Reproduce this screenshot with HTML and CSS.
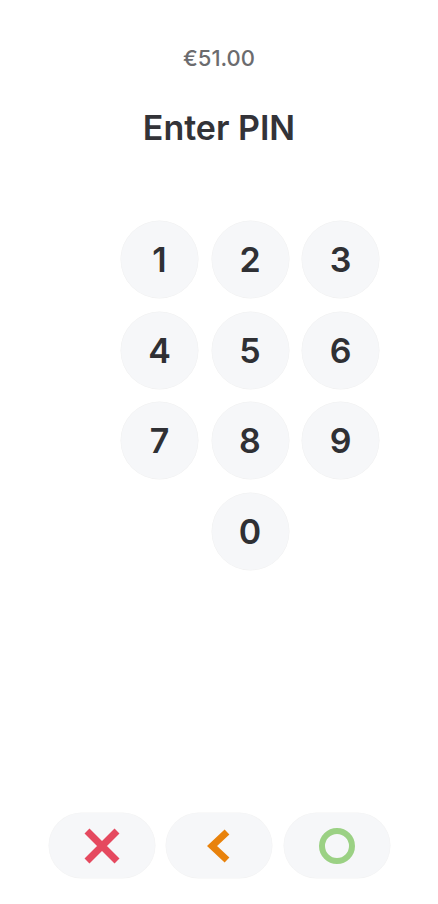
FILE: index.html
```html
<!DOCTYPE html>
<html lang="en">
<head>
  <meta charset="UTF-8" />
  <title>Enter PIN</title>
  <link rel="stylesheet" href="styles.css">
</head>
<body>
  <div class="screen">
    <header class="pin-header">
      <div class="amount">€51.00</div>
      <h1>Enter PIN</h1>
    </header>

    <main class="keypad">
      <button class="key">1</button>
      <button class="key">2</button>
      <button class="key">3</button>
      <button class="key">4</button>
      <button class="key">5</button>
      <button class="key">6</button>
      <button class="key">7</button>
      <button class="key">8</button>
      <button class="key">9</button>
      <button class="key key-zero">0</button>
    </main>

    <footer class="actions">
      <button class="action cancel" aria-label="Cancel">
        <svg width="36" height="36" viewBox="0 0 36 36">
          <path d="M3 3 L33 33 M33 3 L3 33" stroke="#e5495f" stroke-width="7" fill="none"/>
        </svg>
      </button>
      <button class="action back" aria-label="Back">
        <svg width="24" height="34" viewBox="0 0 24 34">
          <path d="M20 3 L5 17 L20 31" stroke="#e8820c" stroke-width="7" fill="none" stroke-linejoin="miter"/>
        </svg>
      </button>
      <button class="action ok" aria-label="OK">
        <svg width="38" height="38" viewBox="0 0 38 38">
          <circle cx="19" cy="19" r="15" stroke="#9bd184" stroke-width="6" fill="none"/>
        </svg>
      </button>
    </footer>
  </div>
</body>
</html>
```

FILE: styles.css
```css
html, body {
  margin: 0;
  padding: 0;
  height: 100%;
  background-color: #fff;
  font-family: Inter, "Noto Sans", Arial, sans-serif;
}

.screen {
  height: 100vh;
  display: flex;
  flex-direction: column;
}

.pin-header {
  padding-top: 45px;
  text-align: center;
}

.amount {
  font-size: 22px;
  line-height: 26px;
  font-weight: 500;
  color: #6b6b6e;
}

.pin-header h1 {
  margin: 37px 0 0;
  font-size: 34px;
  line-height: 40px;
  font-weight: 600;
  color: #333338;
}

.keypad {
  margin-top: 73px;
  padding-left: 121px;
  display: grid;
  grid-template-columns: repeat(3, 77px);
  grid-auto-rows: 77px;
  gap: 13.5px;
}

.key {
  width: 77px;
  height: 77px;
  border: none;
  border-radius: 50%;
  background-color: #f6f7f9;
  box-shadow: 0 0 0 0.5px rgba(0,0,0,0.06);
  font-family: inherit;
  font-size: 34px;
  font-weight: 600;
  color: #2f3034;
  padding: 0;
  cursor: pointer;
}

.key-zero {
  grid-column: 2;
}

.actions {
  margin-top: auto;
  padding-bottom: 26px;
  display: flex;
  justify-content: center;
  gap: 11.5px;
}

.action {
  width: 106px;
  height: 65px;
  border: none;
  border-radius: 33px;
  background-color: #f6f7f9;
  box-shadow: 0 0 0 0.5px rgba(0,0,0,0.05);
  display: flex;
  align-items: center;
  justify-content: center;
  padding: 0;
  cursor: pointer;
}
```
